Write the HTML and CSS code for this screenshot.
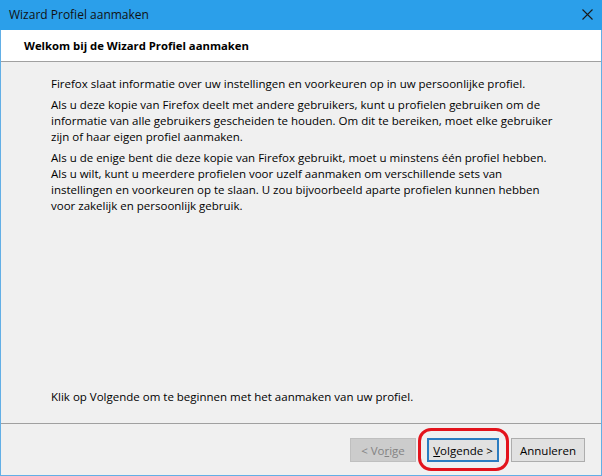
FILE: index.html
```html
<!DOCTYPE html>
<html lang="nl">
  <head>
    <meta charset="UTF-8">
    <meta name="viewport" content="width=device-width, initial-scale=1.0">
    <title>Wizard Profiel aanmaken</title>

    <link rel="stylesheet" href="styles.css">
  </head>
  <body>
    <section class="wizard" aria-label="Wizard Profiel aanmaken">
      <header class="wizard__titlebar">
        <span class="wizard__titlebar__title">Wizard Profiel aanmaken</span>
        <button class="wizard__titlebar__close" aria-label="Sluiten">
          <svg width="11" height="11" viewBox="0 0 11 11" aria-hidden="true">
            <path d="M0.5 0.5 L10.5 10.5 M10.5 0.5 L0.5 10.5" stroke="#1a1a1a" stroke-width="1.1" fill="none"/>
          </svg>
        </button>
      </header>

      <div class="wizard__header">
        <h1 class="wizard__header__title">Welkom bij de Wizard Profiel aanmaken</h1>
      </div>

      <div class="wizard__body">
        <p class="wizard__body__text">
          Firefox slaat informatie over uw instellingen en voorkeuren op in uw persoonlijke profiel.
        </p>
        <p class="wizard__body__text">
          Als u deze kopie van Firefox deelt met andere gebruikers, kunt u profielen gebruiken om de
          informatie van alle gebruikers gescheiden te houden. Om dit te bereiken, moet elke gebruiker
          zijn of haar eigen profiel aanmaken.
        </p>
        <p class="wizard__body__text">
          Als u de enige bent die deze kopie van Firefox gebruikt, moet u minstens één profiel hebben.
          Als u wilt, kunt u meerdere profielen voor uzelf aanmaken om verschillende sets van
          instellingen en voorkeuren op te slaan. U zou bijvoorbeeld aparte profielen kunnen hebben
          voor zakelijk en persoonlijk gebruik.
        </p>
        <p class="wizard__body__text wizard__body__text--footer">
          Klik op Volgende om te beginnen met het aanmaken van uw profiel.
        </p>
      </div>

      <footer class="wizard__actions">
        <button class="wizard__button wizard__button--back" disabled>&lt; Vo<u>r</u>ige</button>
        <button class="wizard__button wizard__button--next"><u>V</u>olgende &gt;</button>
        <button class="wizard__button wizard__button--cancel">Annuleren</button>
        <span class="wizard__highlight" aria-hidden="true"></span>
      </footer>
    </section>
  </body>
</html>
```

FILE: styles.css
```css
:root {
  --swatch-1: #fff;
  --swatch-2: #000;
  --swatch-3: #f0f0f0;
  --swatch-4: #a0a0a0;
  --swatch-5: #2b9fea;
  --swatch-6: #62afe6;
  --swatch-7: #e1e1e1;
  --swatch-8: #adadad;
  --swatch-9: #cccccc;
  --swatch-10: #bfbfbf;
  --swatch-11: #838383;
  --swatch-12: #2c7cc0;
  --swatch-13: #e3131c;

  --font-1-family: "Open Sans", "Noto Sans", Arial, sans-serif;
  --font-1-size: 11.5px;
}

*, *::before, *::after {
  box-sizing: border-box;
}

html, body {
  margin: 0;
  padding: 0;
}

body {
  font-family: var(--font-1-family);
  font-size: var(--font-1-size);
  color: var(--swatch-2);
  background-color: var(--swatch-3);
}

.wizard {
  display: flex;
  flex-direction: column;
  position: relative;
  width: 602px;
  height: 476px;
  border: 1px solid var(--swatch-6);
  border-top: 0;
  background-color: var(--swatch-3);
}

.wizard__titlebar {
  display: flex;
  align-items: center;
  justify-content: space-between;
  height: 30px;
  margin: 0 -1px;
  padding: 0 9px 1px 9px;
  background-color: var(--swatch-5);
}
.wizard__titlebar__title {
  font-size: 12px;
  color: #111;
}
.wizard__titlebar__close {
  display: flex;
  padding: 0;
  border: 0;
  background: none;
}

.wizard__header {
  height: 32px;
  padding: 0 23px;
  display: flex;
  align-items: center;
  background-color: var(--swatch-1);
  border-bottom: 1px solid var(--swatch-4);
}
.wizard__header__title {
  margin: 0;
  font-size: 11.3px;
  font-weight: 700;
}

.wizard__body {
  display: flex;
  flex-direction: column;
  flex: 1;
  padding: 14px 42px 18px 50px;
  border-bottom: 1px solid var(--swatch-4);
}
.wizard__body__text {
  margin: 0 0 5px 0;
  line-height: 16px;
}
.wizard__body__text--footer {
  margin: auto 0 0 0;
}

.wizard__actions {
  display: flex;
  justify-content: flex-end;
  gap: 11px;
  position: relative;
  height: 51px;
  padding: 14px 16px 0 0;
}

.wizard__button {
  height: 24px;
  padding: 0;
  font-family: var(--font-1-family);
  font-size: var(--font-1-size);
  color: var(--swatch-2);
  background-color: var(--swatch-7);
  border: 1px solid var(--swatch-8);
}
.wizard__button--back {
  width: 66px;
  color: var(--swatch-11);
  background-color: var(--swatch-9);
  border-color: var(--swatch-10);
}
.wizard__button--next {
  width: 72px;
  border: 2px solid var(--swatch-12);
}
.wizard__button--cancel {
  width: 74px;
  margin-left: 1px;
}

/* Red annotation drawn around the Volgende button. */
.wizard__highlight {
  position: absolute;
  left: 417px;
  top: 4px;
  width: 91px;
  height: 43px;
  border: 3px solid var(--swatch-13);
  border-radius: 13px;
  pointer-events: none;
}
```
